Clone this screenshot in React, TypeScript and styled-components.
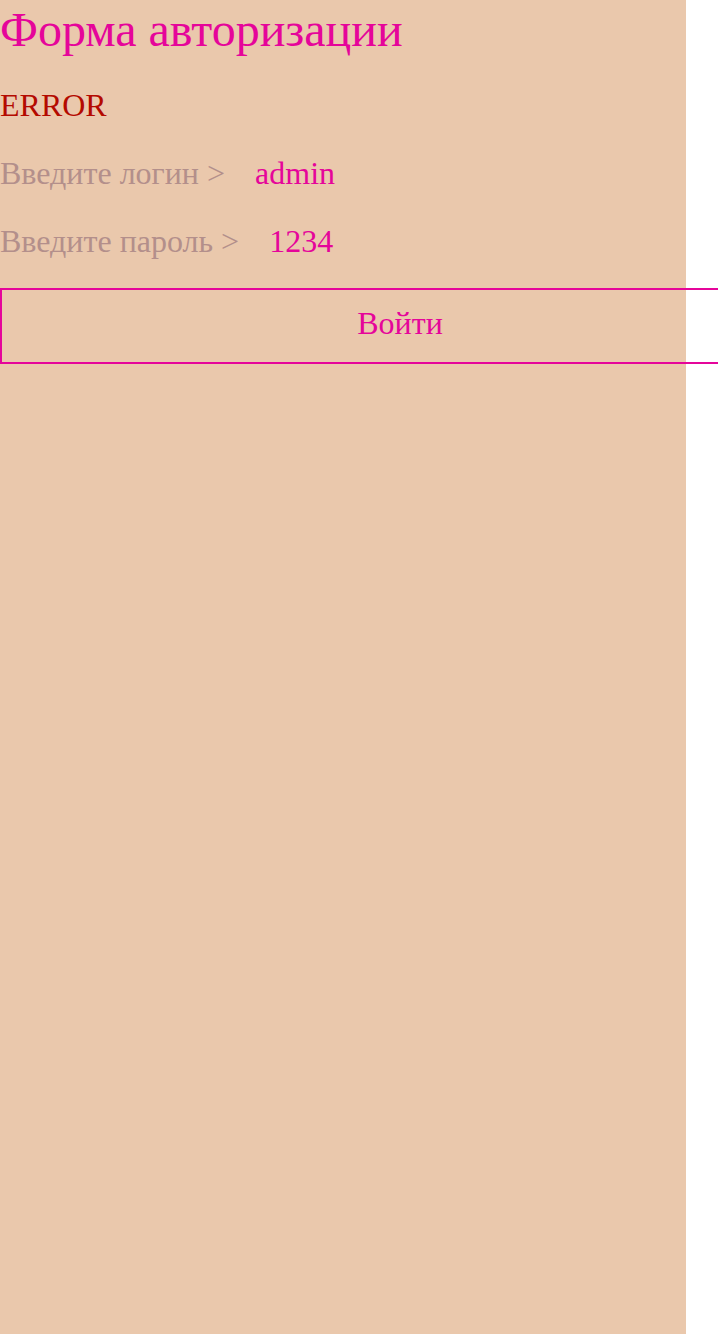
import React from "react";
import styled, { createGlobalStyle } from "styled-components";

const Global = createGlobalStyle`
  html, body { margin: 0; padding: 0; background: #ffffff; }
  body { font-family: "Liberation Serif", "Times New Roman", serif; }
`;

const Page = styled.div`
  width: 686px;
  min-height: 1334px;
  background: #eac8ac;
  display: flex;
  flex-direction: column;
  align-items: flex-start;
`;

const Title = styled.h1`
  margin: 0;
  font-size: 48px;
  font-weight: 400;
  line-height: 60px;
  color: #e5059a;
`;

const ErrorText = styled.div`
  margin-top: 27px;
  font-size: 32px;
  line-height: 37px;
  color: #b40a00;
`;

const Row = styled.div<{ $gap: number; $top: number }>`
  margin-top: ${(p) => p.$top}px;
  display: flex;
  align-items: baseline;
  gap: ${(p) => p.$gap}px;
  font-size: 32px;
  line-height: 37px;
`;

const Label = styled.span`
  color: #b38f8b;
`;

const Value = styled.span`
  color: #e5059a;
`;

const Button = styled.button`
  margin-top: 28px;
  width: 800px;
  height: 76px;
  flex-shrink: 0;
  box-sizing: border-box;
  border: 2px solid #e5059a;
  background: transparent;
  color: #e5059a;
  font-family: "Liberation Serif", "Times New Roman", serif;
  font-size: 32px;
  line-height: 37px;
  padding: 15px 0 20px;
  cursor: pointer;
`;

export default function App() {
  return (
    <>
      <Global />
      <Page>
        <Title>Форма авторизации</Title>
        <ErrorText>ERROR</ErrorText>
        <Row $top={31} $gap={30}>
          <Label>Введите логин &gt;</Label>
          <Value>admin</Value>
        </Row>
        <Row $top={31} $gap={30}>
          <Label>Введите пароль &gt;</Label>
          <Value>1234</Value>
        </Row>
        <Button>Войти</Button>
      </Page>
    </>
  );
}
